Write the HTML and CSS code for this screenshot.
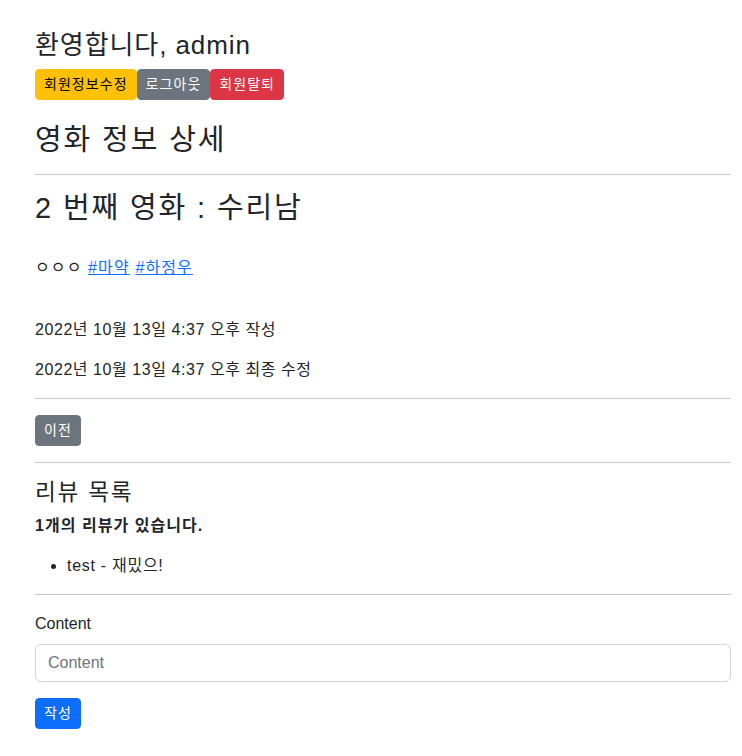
FILE: index.html
```html
<!DOCTYPE html>
<html lang="ko">
<head>
<meta charset="utf-8">
<title>영화 정보 상세</title>
<link rel="stylesheet" href="styles.css">
</head>
<body>
<div class="page">
  <h3 class="welcome">환영합니다, admin</h3>
  <div class="user-actions"><a class="btn btn-sm btn-warning">회원정보수정</a><a class="btn btn-sm btn-secondary">로그아웃</a><a class="btn btn-sm btn-danger">회원탈퇴</a></div>

  <h2 class="page-title">영화 정보 상세</h2>
  <hr>
  <h2 class="movie-title">2 번째 영화 : 수리남</h2>
  <p class="movie-desc">ㅇㅇㅇ <a href="#" class="tag">#마약</a> <a href="#" class="tag">#하정우</a></p>
  <p class="date first">2022년 10월 13일 4:37 오후 작성</p>
  <p class="date">2022년 10월 13일 4:37 오후 최종 수정</p>
  <hr>
  <a class="btn btn-sm btn-secondary">이전</a>
  <hr>
  <h4 class="review-title">리뷰 목록</h4>
  <p class="review-count">1개의 리뷰가 있습니다.</p>
  <ul class="review-list">
    <li>test - 재밌으!</li>
  </ul>
  <hr>
  <form class="review-form">
    <label class="form-label" for="content">Content</label>
    <input class="form-control" id="content" type="text" placeholder="Content">
    <button class="btn btn-sm btn-primary" type="button">작성</button>
  </form>
</div>
</body>
</html>
```

FILE: styles.css
```css
* { box-sizing: border-box; }
html, body { margin: 0; padding: 0; background: #fff; }
body {
  font-family: "Liberation Sans", "Noto Sans CJK KR", sans-serif;
  font-size: 16px;
  line-height: 1.5;
  color: #212529;
}
.page {
  padding: 30px 11px 20px 35px;
}
h1, h2, h3, h4 {
  margin: 0 0 8px;
  font-weight: 400;
  line-height: 1.2;
}
.welcome { font-size: 26px; letter-spacing: 0.035em; }
.user-actions { display: flex; }
.page-title { font-size: 29px; margin-top: 23px; letter-spacing: 0.065em; }
.movie-title { font-size: 29px; letter-spacing: 0.065em; }
hr {
  margin: 16px 0;
  border: 0;
  border-top: 1px solid #c8c8c8;
  height: 0;
}
p { margin: 0 0 16px; }
.movie-desc { margin-top: 30px; margin-bottom: 38px; letter-spacing: 0.07em; }
.date { letter-spacing: 0.035em; }
.tag { color: #0d6efd; text-decoration: underline; }
.review-title { font-size: 22.6px; letter-spacing: 0.08em; }
.review-count { font-weight: 700; letter-spacing: 0.065em; }
.review-list { margin: 0 0 16px; padding-left: 32px; letter-spacing: 0.045em; }
.btn {
  display: inline-block;
  border: 1px solid transparent;
  cursor: pointer;
  font-family: inherit;
  text-decoration: none;
  text-align: center;
  vertical-align: middle;
  letter-spacing: 0.075em;
}
.btn-sm {
  padding: 4px 8px;
  font-size: 14px;
  line-height: 1.5;
  border-radius: 4px;
}
.btn-warning { background: #ffc107; border-color: #ffc107; color: #000; }
.btn-secondary { background: #6c757d; border-color: #6c757d; color: #fff; }
.btn-danger { background: #dc3545; border-color: #dc3545; color: #fff; }
.btn-primary { background: #0d6efd; border-color: #0d6efd; color: #fff; }
.review-form { display: flex; flex-direction: column; align-items: flex-start; }
.form-label { margin-top: 1px; margin-bottom: 8px; }
.form-control {
  display: block;
  width: 100%;
  padding: 6px 12px;
  font-family: inherit;
  font-size: 16px;
  line-height: 1.5;
  color: #212529;
  background: #fff;
  border: 1px solid #ced4da;
  border-radius: 6px;
  margin-bottom: 16px;
}
.form-control::placeholder { color: #6c757d; }
```
